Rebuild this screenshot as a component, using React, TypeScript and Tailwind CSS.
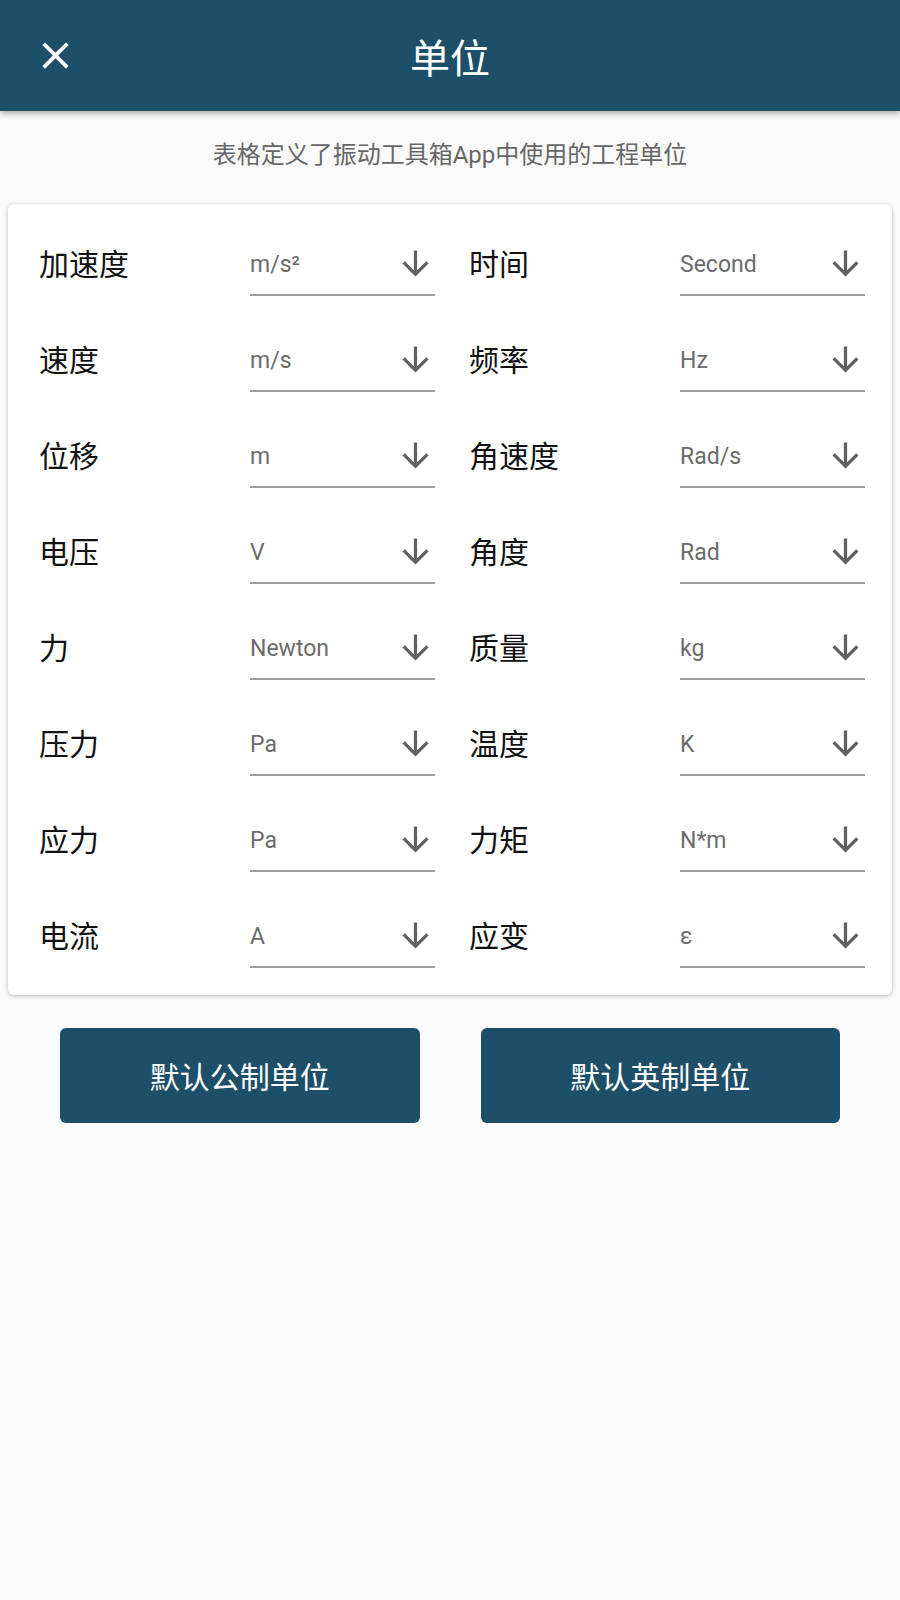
import React from 'react';

type UnitRow = {
  label: string;
  value: string;
};

// left / right pairs, read row by row
const units: UnitRow[] = [
  { label: '加速度', value: 'm/s²' },
  { label: '时间', value: 'Second' },
  { label: '速度', value: 'm/s' },
  { label: '频率', value: 'Hz' },
  { label: '位移', value: 'm' },
  { label: '角速度', value: 'Rad/s' },
  { label: '电压', value: 'V' },
  { label: '角度', value: 'Rad' },
  { label: '力', value: 'Newton' },
  { label: '质量', value: 'kg' },
  { label: '压力', value: 'Pa' },
  { label: '温度', value: 'K' },
  { label: '应力', value: 'Pa' },
  { label: '力矩', value: 'N*m' },
  { label: '电流', value: 'A' },
  { label: '应变', value: 'ε' },
];

const CloseIcon = () => (
  <svg width="45" height="45" viewBox="0 0 24 24" fill="#ffffff">
    <path d="M19 6.41L17.59 5 12 10.59 6.41 5 5 6.41 10.59 12 5 17.59 6.41 19 12 13.41 17.59 19 19 17.59 13.41 12z" />
  </svg>
);

const ArrowDown = () => (
  <svg width="39" height="39" viewBox="0 0 24 24" fill="#616161" className="shrink-0">
    <path d="M20 12l-1.41-1.41L13 16.17V4h-2v12.17l-5.58-5.59L4 12l8 8 8-8z" />
  </svg>
);

const UnitSelect: React.FC<UnitRow> = ({ label, value }) => (
  <div className="flex items-center justify-between">
    <span className="text-[30px] leading-[40px] pb-[6px] text-[#111]">{label}</span>
    <div className="w-[185px] h-[56px] flex items-center justify-between pb-[8px] border-b-2 border-[#9e9e9e]">
      <span className="text-[23px] leading-[30px] pt-[3px] text-[#6b6b6b]">{value}</span>
      <ArrowDown />
    </div>
  </div>
);

export default function App() {
  return (
    <div
      className="min-h-[1600px] bg-[#fafafa]"
      style={{ fontFamily: 'Roboto, "Noto Sans CJK SC", sans-serif' }}
    >
      <header className="relative h-[111px] bg-[#1e4f69] flex items-center justify-center shadow-[0_3px_6px_rgba(0,0,0,0.3)] z-10">
        <button className="absolute left-[33px] top-[33px]">
          <CloseIcon />
        </button>
        <h1 className="text-white text-[40px] leading-[50px] pt-[8px]">单位</h1>
      </header>

      <p className="mt-[28px] text-center text-[24px] leading-[32px] text-[#666]">
        表格定义了振动工具箱App中使用的工程单位
      </p>

      <div className="mx-[8px] mt-[33px] bg-white rounded-[6px] shadow-[0_1px_4px_rgba(0,0,0,0.25)] pt-[36px] pb-[27px] pl-[31px] pr-[27px]">
        <div className="grid grid-cols-2 gap-x-[34px] gap-y-[40px]">
          {units.map((u, i) => (
            <UnitSelect key={i} label={u.label} value={u.value} />
          ))}
        </div>
      </div>

      <div className="mt-[33px] px-[60px] flex gap-[61px]">
        <button className="flex-1 h-[95px] pt-[4px] rounded-[6px] bg-[#1e4f69] text-white text-[30px]">
          默认公制单位
        </button>
        <button className="flex-1 h-[95px] pt-[4px] rounded-[6px] bg-[#1e4f69] text-white text-[30px]">
          默认英制单位
        </button>
      </div>
    </div>
  );
}
